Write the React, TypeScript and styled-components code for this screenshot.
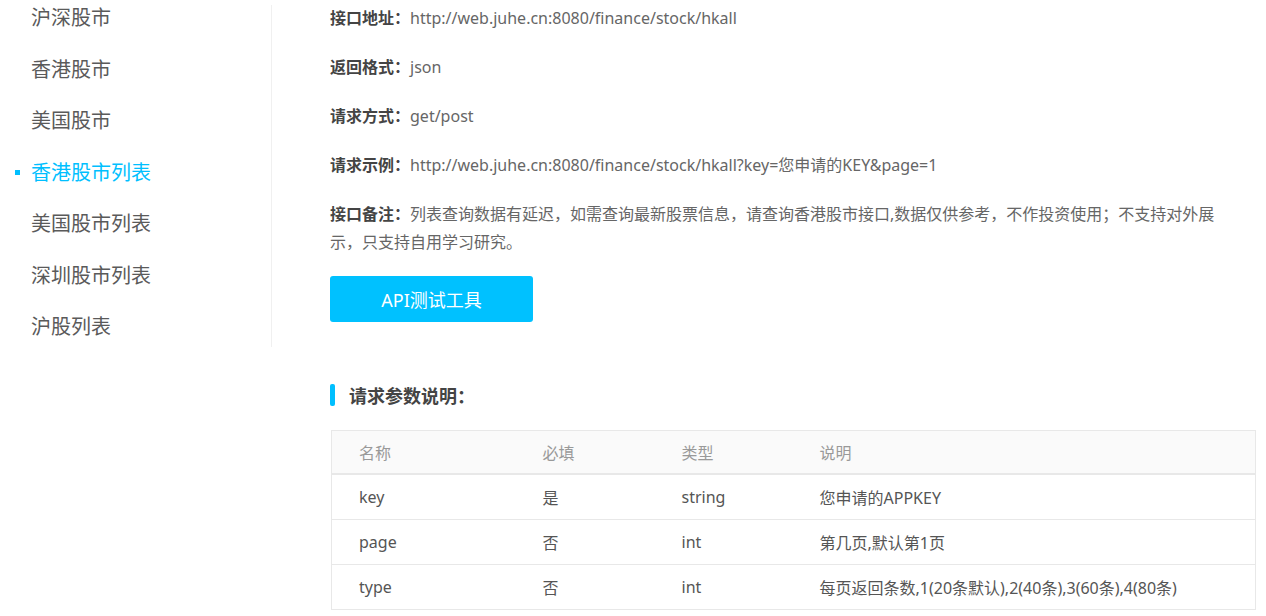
import React from 'react';
import styled, { createGlobalStyle } from 'styled-components';

const GlobalStyle = createGlobalStyle`
  html, body {
    margin: 0;
    padding: 0;
    background: #fff;
  }
  body {
    font-family: "Microsoft YaHei", "Noto Sans", "Noto Sans CJK SC", sans-serif;
  }
`;

const colors = {
  accent: '#00bfff',
  button: '#00c1ff',
  label: '#444',
  text: '#666',
  head: '#999',
  border: '#e8e8e8',
};

const Page = styled.div`
  display: flex;
  align-items: flex-start;
  width: 1266px;
`;

const Sidebar = styled.nav`
  width: 271px;
  height: 342px;
  margin-top: 5px;
  border-right: 1px solid #f0f0f0;
  flex-shrink: 0;
`;

const NavList = styled.ul`
  list-style: none;
  margin: -5px 0 0;
  padding: 0;
  display: flex;
  flex-direction: column;
  gap: 15.5px;
`;

const NavItem = styled.li<{ $active?: boolean }>`
  position: relative;
  height: 36px;
  line-height: 36px;
  padding-left: 31px;
  font-size: 20px;
  color: ${(p) => (p.$active ? colors.accent : '#5a5a5a')};

  &::before {
    content: '';
    display: ${(p) => (p.$active ? 'block' : 'none')};
    position: absolute;
    left: 15px;
    top: 15px;
    width: 5px;
    height: 5px;
    background: ${colors.accent};
  }
`;

const Main = styled.main`
  flex: 1;
  padding: 4px 0 0 58px;
  display: flex;
  flex-direction: column;
  align-items: flex-start;
`;

const InfoRow = styled.p<{ $wide?: boolean }>`
  margin: 0 0 21px;
  line-height: 28px;
  font-size: 16px;
  color: ${colors.text};
  max-width: ${(p) => (p.$wide ? '895px' : 'none')};
`;

const Label = styled.b`
  color: ${colors.label};
  font-weight: bold;
`;

const TestButton = styled.button`
  margin-top: -1px;
  width: 203px;
  height: 46px;
  border: none;
  border-radius: 3px;
  background: ${colors.button};
  color: #fff;
  font-family: inherit;
  font-size: 18px;
  cursor: pointer;
`;

const SectionTitle = styled.h3`
  display: flex;
  align-items: center;
  gap: 14px;
  margin: 62px 0 0;
  height: 22px;
  font-size: 18px;
  font-weight: bold;
  color: ${colors.label};

  &::before {
    content: '';
    width: 5px;
    height: 22px;
    border-radius: 2px;
    background: ${colors.accent};
  }
`;

const ParamTable = styled.table`
  margin: 24px 0 0 1px;
  width: 925px;
  border-collapse: collapse;
  border: 1px solid ${colors.border};
  font-size: 16px;
  text-align: left;
`;

const HeadCell = styled.th<{ $w?: number }>`
  width: ${(p) => (p.$w ? `${p.$w}px` : 'auto')};
  height: 43px;
  padding: 0 0 0 27px;
  background: #fafafa;
  color: ${colors.head};
  font-weight: normal;
  border-bottom: 2px solid ${colors.border};
  box-sizing: border-box;
`;

const Cell = styled.td`
  height: 44px;
  padding: 0 0 0 27px;
  color: #555;
  border-bottom: 1px solid ${colors.border};
`;

const navItems = ['沪深股市', '香港股市', '美国股市', '香港股市列表', '美国股市列表', '深圳股市列表', '沪股列表'];

const params = [
  { name: 'key', required: '是', type: 'string', desc: '您申请的APPKEY' },
  { name: 'page', required: '否', type: 'int', desc: '第几页,默认第1页' },
  { name: 'type', required: '否', type: 'int', desc: '每页返回条数,1(20条默认),2(40条),3(60条),4(80条)' },
];

const App: React.FC = () => {
  return (
    <Page>
      <GlobalStyle />
      <Sidebar>
        <NavList>
          {navItems.map((item) => (
            <NavItem key={item} $active={item === '香港股市列表'}>
              {item}
            </NavItem>
          ))}
        </NavList>
      </Sidebar>

      <Main>
        <InfoRow>
          <Label>接口地址：</Label>http://web.juhe.cn:8080/finance/stock/hkall
        </InfoRow>
        <InfoRow>
          <Label>返回格式：</Label>json
        </InfoRow>
        <InfoRow>
          <Label>请求方式：</Label>get/post
        </InfoRow>
        <InfoRow>
          <Label>请求示例：</Label>http://web.juhe.cn:8080/finance/stock/hkall?key=您申请的KEY&amp;page=1
        </InfoRow>
        <InfoRow $wide>
          <Label>接口备注：</Label>
          列表查询数据有延迟，如需查询最新股票信息，请查询香港股市接口,数据仅供参考，不作投资使用；不支持对外展示，只支持自用学习研究。
        </InfoRow>

        <TestButton>API测试工具</TestButton>

        <SectionTitle>请求参数说明：</SectionTitle>

        <ParamTable>
          <thead>
            <tr>
              <HeadCell $w={184}>名称</HeadCell>
              <HeadCell $w={139}>必填</HeadCell>
              <HeadCell $w={138}>类型</HeadCell>
              <HeadCell>说明</HeadCell>
            </tr>
          </thead>
          <tbody>
            {params.map((p) => (
              <tr key={p.name}>
                <Cell>{p.name}</Cell>
                <Cell>{p.required}</Cell>
                <Cell>{p.type}</Cell>
                <Cell>{p.desc}</Cell>
              </tr>
            ))}
          </tbody>
        </ParamTable>
      </Main>
    </Page>
  );
};

export default App;
